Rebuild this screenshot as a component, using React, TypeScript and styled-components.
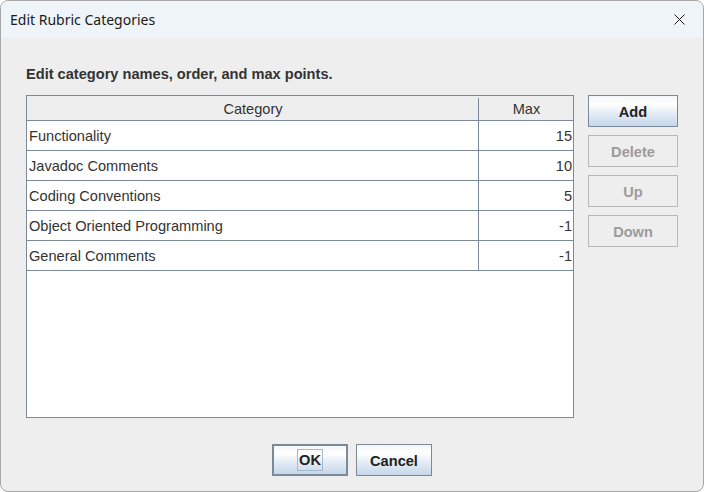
import React from 'react';
import styled, { createGlobalStyle } from 'styled-components';

const GlobalStyle = createGlobalStyle`
  html, body {
    margin: 0;
    padding: 0;
    background: #ffffff;
  }
  * {
    box-sizing: border-box;
  }
`;

const Window = styled.div`
  width: 704px;
  height: 492px;
  border: 1px solid #a6a6a6;
  border-radius: 8px;
  overflow: hidden;
  background: #eeeeee;
  display: flex;
  flex-direction: column;
  font-family: 'Liberation Sans', Arial, sans-serif;
  color: #333333;
`;

const TitleBar = styled.div`
  height: 37px;
  flex: none;
  background: #eef4f8;
  display: flex;
  align-items: center;
  justify-content: space-between;
  padding-left: 9px;
`;

const Title = styled.span`
  font-family: 'Noto Sans', 'Open Sans', sans-serif;
  font-size: 14px;
  color: #1a1a1a;
`;

const CloseButton = styled.div`
  width: 46px;
  height: 37px;
  display: flex;
  align-items: center;
  justify-content: center;
  margin-top: -1px;
  margin-right: 1px;
`;

const Body = styled.div`
  flex: 1;
  display: flex;
  flex-direction: column;
  padding: 28px 25px 15px 25px;
`;

const Prompt = styled.div`
  font-size: 14.6px;
  line-height: 17px;
  font-weight: bold;
  margin-bottom: 12px;
`;

const Main = styled.div`
  display: flex;
  gap: 14px;
`;

const ScrollPane = styled.div`
  width: 548px;
  height: 323px;
  border: 1px solid #7a8a99;
  background: #ffffff;
  display: flex;
  flex-direction: column;
`;

const Row = styled.div<{ $header?: boolean }>`
  display: grid;
  grid-template-columns: 452px 1fr;
  height: ${(p) => (p.$header ? '25px' : '30px')};
  padding-top: ${(p) => (p.$header ? '2px' : '0')};
  border-bottom: 1px solid #7a8a99;
  background: ${(p) => (p.$header ? '#eeeeee' : '#ffffff')};
  font-size: 14.6px;
`;

const Cell = styled.div<{ $align: 'left' | 'center' | 'right'; $divider?: boolean }>`
  display: flex;
  align-items: center;
  justify-content: ${(p) =>
    p.$align === 'left' ? 'flex-start' : p.$align === 'right' ? 'flex-end' : 'center'};
  padding: 0 1px 0 2px;
  border-right: ${(p) => (p.$divider ? '1px solid #7a8a99' : 'none')};
  white-space: nowrap;
`;

const SideButtons = styled.div`
  display: flex;
  flex-direction: column;
  gap: 8px;
`;

const Button = styled.button<{ $width: number; $default?: boolean }>`
  width: ${(p) => p.$width}px;
  height: 32px;
  padding: 2px 0 0 0;
  font-family: 'Liberation Sans', Arial, sans-serif;
  font-size: 14.6px;
  font-weight: bold;
  color: #222222;
  border: ${(p) => (p.$default ? '2px' : '1px')} solid #7a8a99;
  background: linear-gradient(
    to bottom,
    #f3f6f9 0%,
    #ffffff 28%,
    #e6eef6 55%,
    #c5d7e9 100%
  );
  display: flex;
  align-items: center;
  justify-content: center;

  &:disabled {
    background: #eeeeee;
    border-color: #b8b8b8;
    color: #9c9c9c;
  }
`;

const FocusRing = styled.span`
  display: inline-flex;
  align-items: center;
  justify-content: center;
  height: 22px;
  padding: 0 1px;
  margin-top: -2px;
  border: 1px solid #a3b8cc;
`;

const Footer = styled.div`
  margin-top: 26px;
  display: flex;
  justify-content: center;
  gap: 8px;
`;

const categories: { name: string; max: number }[] = [
  { name: 'Functionality', max: 15 },
  { name: 'Javadoc Comments', max: 10 },
  { name: 'Coding Conventions', max: 5 },
  { name: 'Object Oriented Programming', max: -1 },
  { name: 'General Comments', max: -1 },
];

const App: React.FC = () => {
  return (
    <>
      <GlobalStyle />
      <Window>
        <TitleBar>
          <Title>Edit Rubric Categories</Title>
          <CloseButton>
            <svg width='11' height='11' viewBox='0 0 11 11'>
              <path d='M0.5 0.5 L10.5 10.5 M10.5 0.5 L0.5 10.5' stroke='#1a1a1a' strokeWidth='1' />
            </svg>
          </CloseButton>
        </TitleBar>
        <Body>
          <Prompt>Edit category names, order, and max points.</Prompt>
          <Main>
            <ScrollPane>
              <Row $header>
                <Cell $align='center' $divider>
                  Category
                </Cell>
                <Cell $align='center'>Max</Cell>
              </Row>
              {categories.map((c) => (
                <Row key={c.name}>
                  <Cell $align='left' $divider>
                    {c.name}
                  </Cell>
                  <Cell $align='right'>{c.max}</Cell>
                </Row>
              ))}
            </ScrollPane>
            <SideButtons>
              <Button $width={90}>Add</Button>
              <Button $width={90} disabled>
                Delete
              </Button>
              <Button $width={90} disabled>
                Up
              </Button>
              <Button $width={90} disabled>
                Down
              </Button>
            </SideButtons>
          </Main>
          <Footer>
            <Button $width={76} $default>
              <FocusRing>OK</FocusRing>
            </Button>
            <Button $width={76}>Cancel</Button>
          </Footer>
        </Body>
      </Window>
    </>
  );
};

export default App;
